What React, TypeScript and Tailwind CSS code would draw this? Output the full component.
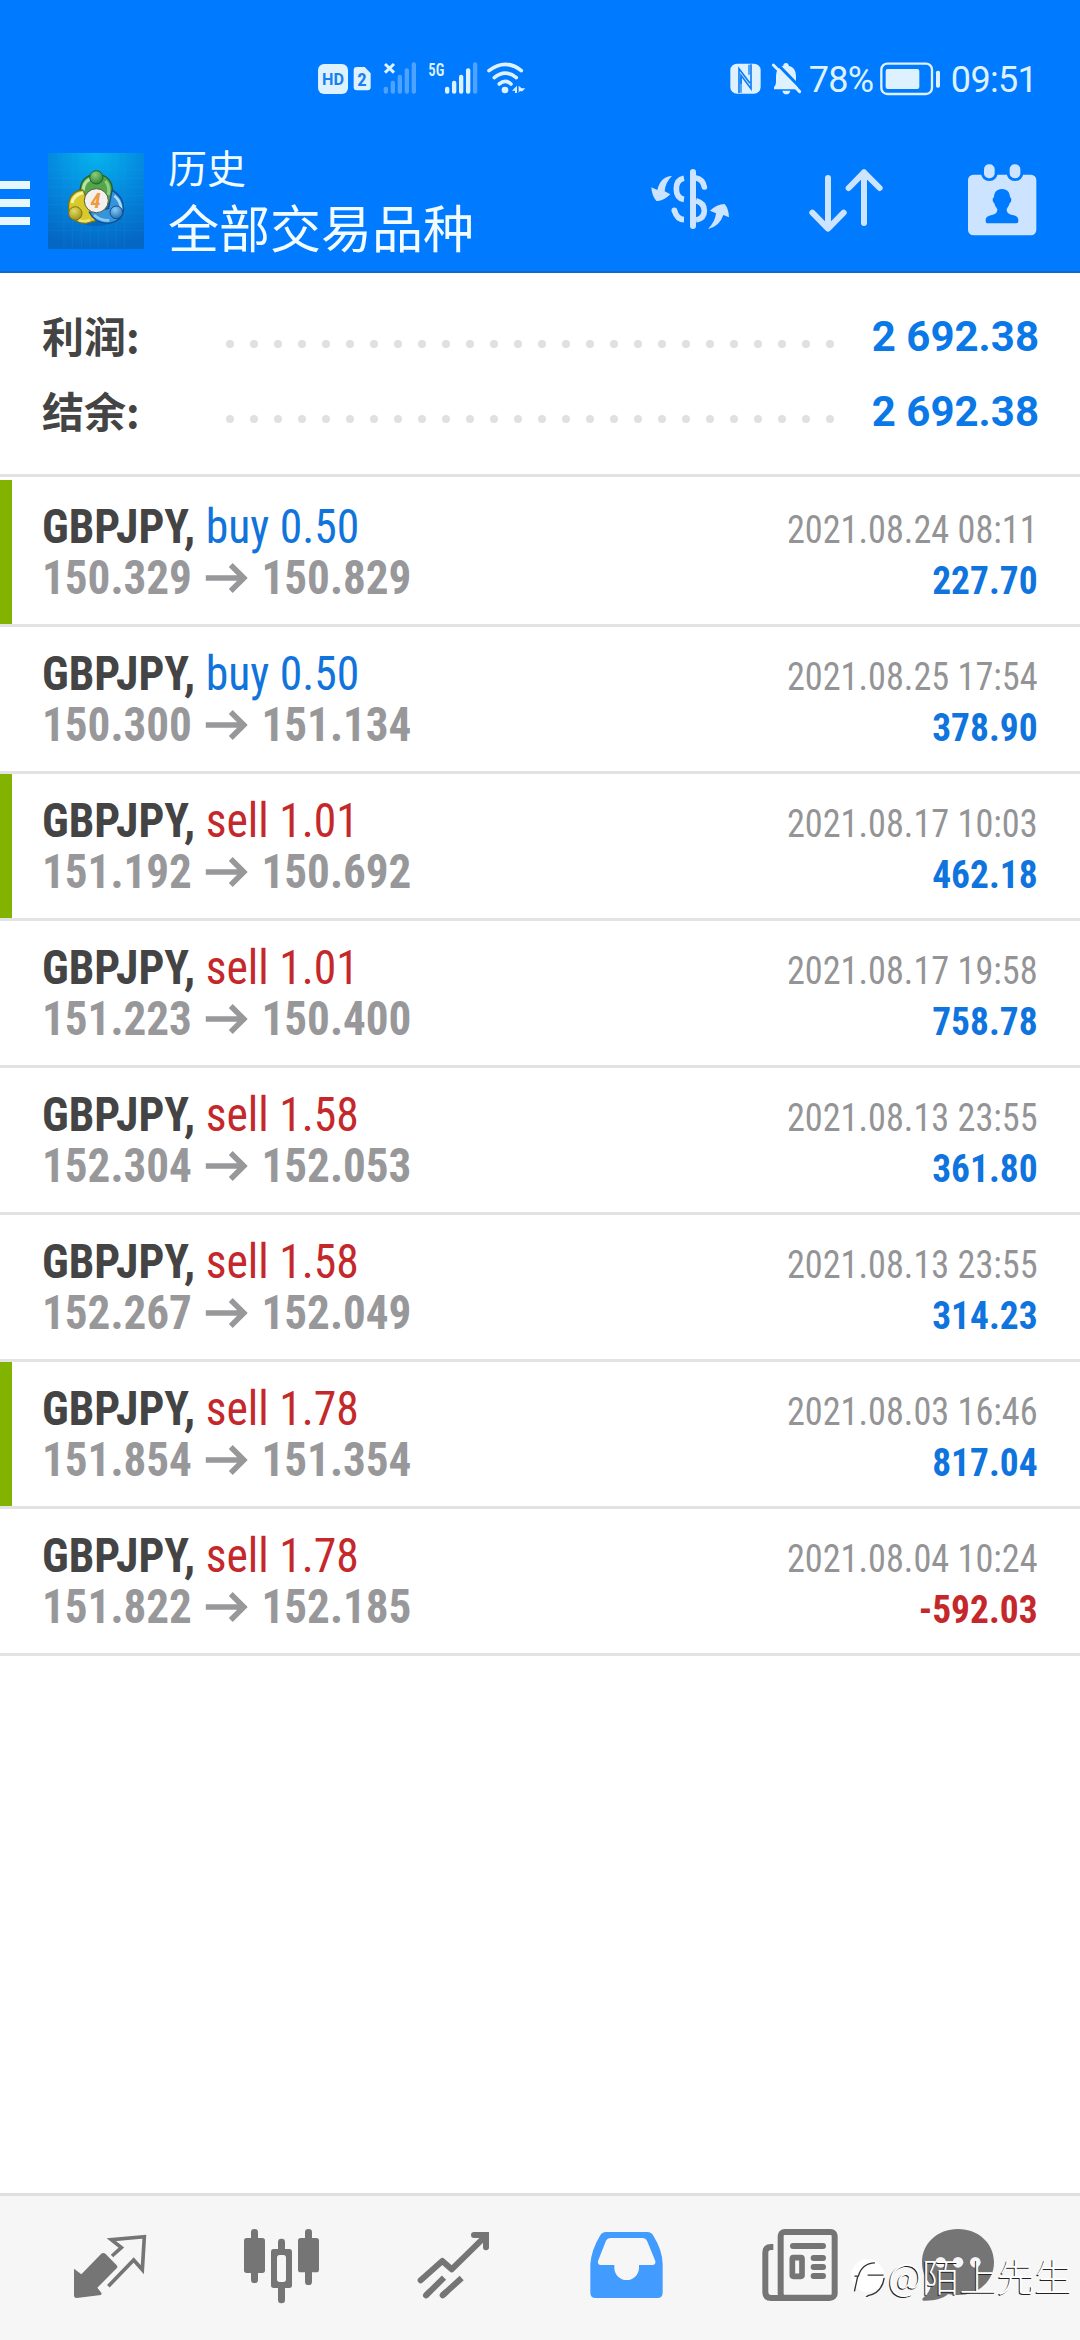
type Deal = {
  side: 'buy' | 'sell'
  volume: string
  open: string
  close: string
  time: string
  profit: string
  marked?: boolean
}

const deals: Deal[] = [
  { side: 'buy', volume: '0.50', open: '150.329', close: '150.829', time: '2021.08.24 08:11', profit: '227.70', marked: true },
  { side: 'buy', volume: '0.50', open: '150.300', close: '151.134', time: '2021.08.25 17:54', profit: '378.90' },
  { side: 'sell', volume: '1.01', open: '151.192', close: '150.692', time: '2021.08.17 10:03', profit: '462.18', marked: true },
  { side: 'sell', volume: '1.01', open: '151.223', close: '150.400', time: '2021.08.17 19:58', profit: '758.78' },
  { side: 'sell', volume: '1.58', open: '152.304', close: '152.053', time: '2021.08.13 23:55', profit: '361.80' },
  { side: 'sell', volume: '1.58', open: '152.267', close: '152.049', time: '2021.08.13 23:55', profit: '314.23' },
  { side: 'sell', volume: '1.78', open: '151.854', close: '151.354', time: '2021.08.03 16:46', profit: '817.04', marked: true },
  { side: 'sell', volume: '1.78', open: '151.822', close: '152.185', time: '2021.08.04 10:24', profit: '-592.03' },
]

const summary = [
  { label: '利润:', value: '2 692.38' },
  { label: '结余:', value: '2 692.38' },
]

const dots = Array.from({ length: 26 }, (_, i) => i)

function SignalIcons() {
  return (
    <svg viewBox="45 60 645 110" className="h-[36.67px] w-[215px]" fill="#def1ff">
      <rect x="54" y="72" width="90" height="90" rx="18" />
      <text x="99" y="136" textAnchor="middle" fill="#1a7ff0" fontSize="50" fontWeight="700" textLength="66" lengthAdjust="spacingAndGlyphs" className="font-['Roboto']">HD</text>
      <path d="M170 81h24l18 19v42q0 9-9 9h-33q-9 0-9-9V90q0-9 9-9z" />
      <text x="186" y="138" textAnchor="middle" fill="#1a7ff0" fontSize="56" fontWeight="700" className="font-['Roboto_Condensed','Roboto']">2</text>
      <g fill="#4da3ff">
        <rect x="251" y="140" width="13" height="21" rx="6" />
        <rect x="272" y="122" width="13" height="39" rx="6" />
        <rect x="293" y="104" width="13" height="57" rx="6" />
        <rect x="314" y="85" width="13" height="76" rx="6" />
        <rect x="335" y="67" width="13" height="94" rx="6" />
      </g>
      <path d="M255 72l27 26M282 72l-27 26" stroke="#def1ff" strokeWidth="9" />
      <text x="385" y="109" fontSize="54" fontWeight="600" textLength="48" lengthAdjust="spacingAndGlyphs" className="font-['Roboto_Condensed','Roboto']">5G</text>
      <rect x="435" y="140" width="13" height="21" rx="6" />
      <rect x="456" y="122" width="13" height="39" rx="6" />
      <rect x="477" y="104" width="13" height="57" rx="6" />
      <rect x="498" y="85" width="13" height="76" rx="6" />
      <rect x="519" y="67" width="13" height="94" rx="6" fill="#4da3ff" />
      <g fill="none" stroke="#def1ff" strokeWidth="11" strokeLinecap="round">
        <path d="M567 92q49-38 97 0" />
        <path d="M583 113q33-27 66 0" />
        <path d="M598 132q18-16 35 0" />
      </g>
      <circle cx="615" cy="150" r="10" />
      <path d="M636 152l15-15v22h-6v-7zM656 137v22l3-5h8l9-9h-11z" />
    </svg>
  )
}

function NfcIcon() {
  return (
    <svg viewBox="90 67 93 93" className="size-[31px]">
      <rect x="91" y="69" width="91" height="90" rx="20" fill="#def1ff" />
      <path d="M117 157V84l33 44M153 71v73l-30-40v26" fill="none" stroke="#0f7dfa" strokeWidth="5" />
      <path d="M123 108v48M147 72v30" fill="none" stroke="#0f7dfa" strokeWidth="4" />
    </svg>
  )
}

function MutedBellIcon() {
  return (
    <svg viewBox="212 65 93 98" className="h-[32.67px] w-[31px]" fill="#def1ff">
      <path d="M221 147h72v-7q-6-5-6-15v-18q0-26-22-31a8 8 0 0 0-16 0q-22 5-22 31v18q0 10-6 15z" />
      <path d="M246 151h24q-2 11-12 11t-12-11z" />
      <path d="M225 65l82 84" stroke="#007aff" strokeWidth="9" />
      <path d="M219 74l79 80" stroke="#def1ff" strokeWidth="9" strokeLinecap="round" />
    </svg>
  )
}

function BatteryIcon() {
  return (
    <svg viewBox="538 64 184 102" className="h-[34px] w-[61.33px]">
      <rect x="542" y="69" width="152" height="91" rx="18" fill="none" stroke="#def1ff" strokeWidth="7" />
      <rect x="555" y="85" width="101" height="60" rx="6" fill="#def1ff" />
      <rect x="706" y="90" width="12" height="51" rx="5" fill="#def1ff" />
    </svg>
  )
}

function StatusBar() {
  return (
    <div className="flex h-[130px] items-center justify-between pt-[27px] pr-[43px] pl-[315px] text-[#def1ff]">
      <SignalIcons />
      <div className="flex items-center font-['Roboto'] text-[36px] leading-10">
        <NfcIcon />
        <div className="ml-[10px]"><MutedBellIcon /></div>
        <span className="mt-[2px] ml-[7px] tracking-[-0.7px]">78%</span>
        <div className="ml-[6px]"><BatteryIcon /></div>
        <span className="mt-[2px] ml-[10px] tracking-[-0.7px]">09:51</span>
      </div>
    </div>
  )
}

function Logo() {
  return (
    <svg viewBox="0 0 288 288" className="size-24">
      <defs>
        <radialGradient id="sky" cx="0.5" cy="0" r="1">
          <stop offset="0" stopColor="#06b4ee" />
          <stop offset="0.5" stopColor="#0489de" />
          <stop offset="1" stopColor="#0467c4" />
        </radialGradient>
        <radialGradient id="green" cx="0.4" cy="0.3" r="0.8">
          <stop offset="0" stopColor="#8fce7c" />
          <stop offset="1" stopColor="#237a2c" />
        </radialGradient>
        <radialGradient id="gold" cx="0.4" cy="0.3" r="0.8">
          <stop offset="0" stopColor="#e6dc62" />
          <stop offset="1" stopColor="#978a12" />
        </radialGradient>
        <radialGradient id="azure" cx="0.4" cy="0.3" r="0.8">
          <stop offset="0" stopColor="#86cbf5" />
          <stop offset="1" stopColor="#1768b4" />
        </radialGradient>
      </defs>
      <rect width="288" height="288" fill="url(#sky)" />
      <path d="M48 0v288M74 0v288M100 0v288M126 0v288M152 0v288M178 0v288M204 0v288M230 0v288M0 50h288M0 76h288M0 102h288M0 128h288M0 154h288M0 180h288M0 206h288M0 232h288" stroke="#4dbcf5" strokeOpacity="0.14" strokeWidth="2" />
      <ellipse cx="145" cy="158" rx="82" ry="62" fill="#04489c" opacity="0.35" />
      <path d="M96 122q-2-56 50-58 48 2 48 56l-4 34-46-18-46-6z" fill="#54a64b" stroke="#1b6530" strokeWidth="4" />
      <path d="M105 114q2-36 36-40" fill="none" stroke="#b9e3a5" strokeWidth="9" />
      <path d="M172 84q14 14 9 42" fill="none" stroke="#8fce7c" strokeWidth="9" />
      <path d="M104 111q-38 4-42 44-4 52 52 56l30-8-24-60z" fill="#d9ca2c" stroke="#7f7512" strokeWidth="4" />
      <path d="M72 150q4-25 34-31" fill="none" stroke="#f8f2a0" strokeWidth="9" />
      <path d="M92 202q16 6 34-1" fill="none" stroke="#eee273" strokeWidth="8" />
      <path d="M192 112q34 18 35 58-5 38-50 41-38-2-53-33l58-12z" fill="#3594dc" stroke="#124f92" strokeWidth="4" />
      <path d="M199 128q20 16 20 40" fill="none" stroke="#a8dcfa" strokeWidth="8" />
      <path d="M138 186q20 18 46 16" fill="none" stroke="#8acbf5" strokeWidth="8" />
      <circle cx="145" cy="73" r="20" fill="url(#green)" stroke="#1b6530" strokeWidth="3" />
      <circle cx="82" cy="181" r="20" fill="url(#gold)" stroke="#7f7512" strokeWidth="3" />
      <circle cx="205" cy="178" r="19" fill="url(#azure)" stroke="#124f92" strokeWidth="3" />
      <circle cx="145" cy="143" r="36" fill="#f3f1ef" stroke="#5d5a38" strokeWidth="3" />
      <text x="143" y="165" textAnchor="middle" fontSize="62" fontWeight="700" fontStyle="italic" fill="#f09a3e" className="font-['Roboto_Condensed','Roboto']">4</text>
    </svg>
  )
}

function CurrencyIcon() {
  return (
    <svg viewBox="84 66 252 222" className="h-[74px] w-[84px]" fill="#cce4ff">
      <rect x="210" y="87" width="18" height="180" rx="9" />
      <g fill="none" stroke="#cce4ff" strokeWidth="17">
        <path d="M192 115q-23 4-23 32t23 31" />
        <path d="M228 114q20 3 25 27" strokeLinecap="round" />
        <path d="M163 211q8 27 29 28" />
        <path d="M228 182q25 7 25 30t-25 28" />
      </g>
      <circle cx="163" cy="211" r="8.500" />
      <path d="M156 108q-35 2-44 42l-18-8q1 24 15 41 20 2 42-20l-17-9q2-27 22-46z" />
      <path d="M264 267q35-8 46-42l17 7q-1-26-13-40-24 1-44 20l18 8q-2 25-24 47z" />
    </svg>
  )
}

function SortIcon() {
  return (
    <svg viewBox="564 66 228 222" className="h-[74px] w-[76px]" fill="none" stroke="#cce4ff" strokeWidth="18" strokeLinecap="round" strokeLinejoin="round">
      <path d="M624 114v151M577 218l47 48 47-48" />
      <path d="M732 249V97M686 144l46-47 47 47" />
    </svg>
  )
}

function CalendarIcon() {
  return (
    <svg viewBox="1038 66 216 222" className="h-[74px] w-[72px]">
      <rect x="1044" y="104" width="205" height="182" rx="16" fill="#cce4ff" />
      <rect x="1083" y="66" width="50" height="57" rx="24" fill="#007aff" />
      <rect x="1160" y="66" width="50" height="57" rx="24" fill="#007aff" />
      <rect x="1092" y="73" width="32" height="42" rx="15" fill="#cce4ff" />
      <rect x="1169" y="73" width="32" height="42" rx="15" fill="#cce4ff" />
      <path d="M1146 147c17 0 24 12 24 25 5 1 6 13-1 18-3 10-8 14-9 18 0 11 7 15 17 17 15 3 18 8 18 17q0 8-7 8h-84q-7 0-7-8c0-9 4-14 18-17 11-2 17-6 17-17-1-4-7-8-9-18-7-5-6-17-1-18 0-13 7-25 24-25z" fill="#007aff" />
    </svg>
  )
}

function Header() {
  return (
    <header className="h-[273px] border-b-2 border-[#1268c8] bg-[#007aff]">
      <StatusBar />
      <div className="flex h-[141px] items-start">
        <div className="mt-[51px] flex w-[30px] flex-col gap-[10px]">
          <div className="h-2 bg-[#e6f7ff]" />
          <div className="h-2 bg-[#e6f7ff]" />
          <div className="h-2 bg-[#e6f7ff]" />
        </div>
        <div className="mt-[23px] ml-[18px]"><Logo /></div>
        <div className="mt-[6px] ml-6 flex-1 font-['Noto_Sans_CJK_SC',sans-serif] text-[#f2fbff]">
          <div className="text-[39px] leading-[60px]">历史</div>
          <div className="text-[51px] leading-[60px]">全部交易品种</div>
        </div>
        <div className="mt-8 mr-[42px] flex">
          <CurrencyIcon />
          <div className="ml-[76px]"><SortIcon /></div>
          <div className="ml-[82px]"><CalendarIcon /></div>
        </div>
      </div>
    </header>
  )
}

function SummaryRow({ label, value }: { label: string; value: string }) {
  return (
    <div className="flex h-[75px] items-center pr-[41px] pl-[42px] text-[42px] leading-[71px] font-bold">
      <div className="w-[184px] pb-1 font-['Noto_Sans_CJK_SC',sans-serif] text-[#444444]">{label}</div>
      <div className="mt-[15px] flex w-[608px] justify-between">
        {dots.map((dot) => (
          <span key={dot} className="size-2 rounded-full bg-[#e0e0e0]" />
        ))}
      </div>
      <div className="flex-1 text-right font-['Roboto',sans-serif] text-[#0b78e8]">{value}</div>
    </div>
  )
}

function Arrow() {
  return (
    <svg viewBox="0 0 42 32" preserveAspectRatio="none" className="mr-[15px] ml-[14px] h-8 w-[45px]" fill="none" stroke="#98989b" strokeWidth="5.500">
      <path d="M0 16h38M25 3l13 13-13 13" />
    </svg>
  )
}

function DealRow({ deal }: { deal: Deal }) {
  return (
    <div className="flex h-[147px] border-b-3 border-[#e3e3e3] font-['Roboto_Condensed','Roboto',sans-serif]">
      <div className={deal.marked ? 'w-3 bg-[#82b300]' : 'w-3'} />
      <div className="flex flex-1 justify-between pr-[42px] pl-[30px]">
        <div className="pt-[21px] text-[48px] leading-[51px]">
          <div className="origin-left scale-x-95">
            <span className="font-bold text-[#444444]">GBPJPY, </span>
            <span className={deal.side === 'buy' ? 'text-[#1174dc]' : 'text-[#c5282b]'}>
              {deal.side} {deal.volume}
            </span>
          </div>
          <div className="flex origin-left scale-x-[0.94] items-center font-bold text-[#98989b]">
            {deal.open}
            <Arrow />
            {deal.close}
          </div>
        </div>
        <div className="pt-[25px] text-right text-[39px] leading-[51px]">
          <div className="origin-right scale-x-[0.93] text-[#949496]">{deal.time}</div>
          <div className={deal.profit.startsWith('-') ? 'origin-right scale-x-[0.96] font-bold text-[#c5282b]' : 'origin-right scale-x-[0.96] font-bold text-[#0f74dd]'}>
            {deal.profit}
          </div>
        </div>
      </div>
    </div>
  )
}

function TabBar() {
  return (
    <nav className="relative flex h-[147px] gap-[76px] border-t-3 border-[#dfdfdf] bg-[#f6f6f6] pt-[28px] pl-[62px]">
      {/* quotes */}
      <svg viewBox="66 132 288 252" className="h-[84px] w-24" fill="#757575">
        <path d="M102 266l22 17 59-61q7-6 14 0l33 34q4 5 0 9l-58 58 13 17-2 5-73 9q-8 0-8-8z" />
        <path d="M216 228l28-25-30-24 99-9-6 99-26-29-76 79" fill="none" stroke="#757575" strokeWidth="11" />
      </svg>
      {/* charts */}
      <svg viewBox="582 132 288 252" className="h-[84px] w-24" fill="#757575">
        <rect x="633" y="147" width="21" height="162" rx="10" />
        <rect x="612" y="174" width="63" height="105" rx="8" />
        <rect x="714" y="176" width="21" height="194" rx="10" />
        <rect x="693" y="207" width="63" height="117" rx="8" />
        <rect x="711" y="225" width="27" height="81" rx="8" fill="#f6f6f6" />
        <rect x="795" y="147" width="21" height="168" rx="10" />
        <rect x="774" y="174" width="63" height="103" rx="8" />
      </svg>
      {/* trade */}
      <svg viewBox="78 132 288 252" className="h-[84px] w-24" fill="none" stroke="#757575" strokeWidth="18" strokeLinecap="round">
        <path d="M122 301l65-58 28 25 100-98" strokeLinejoin="round" />
        <path d="M282 165h36v37" />
        <path d="M138 346l54-53M188 346l57-52" strokeLinecap="butt" />
        <path d="M138 346l10-10M188 346l10-9" />
      </svg>
      {/* history */}
      <svg viewBox="594 132 288 252" className="h-[84px] w-24">
        <path d="M678 156h124q12 0 18 11 27 43 28 85v86q0 16-16 16H647q-16 0-16-16v-86q3-42 29-85 6-11 18-11z" fill="#429bff" />
        <path d="M691 174h97q9 0 13 8l25 61q2 12-9 12h-40v8a37 37 0 0 1-74 0v-8h-40q-11 0-9-12l24-61q4-8 13-8z" fill="#f6f6f6" />
      </svg>
      {/* news */}
      <svg viewBox="60 132 288 252" className="h-[84px] w-24" fill="none" stroke="#757575" strokeWidth="18">
        <path d="M130 201h-7q-17 0-17 17v118q0 18 18 18h176" />
        <rect x="152" y="156" width="162" height="197" rx="12" />
        <path d="M189 198h90M251 234h28M251 261h28M251 288h28" strokeLinecap="round" />
        <rect x="187" y="233" width="29" height="56" rx="3" strokeWidth="17" />
      </svg>
      {/* messages */}
      <svg viewBox="576 132 288 252" className="h-[84px] w-24" fill="#757575">
        <path d="M684 147c62 0 108 44 108 100s-46 98-108 98c-12 0-20-1-29-3-17 14-42 21-75 20-4-1-4-6 0-9 17-16 22-26 22-39-17-18-26-41-26-67 0-56 46-100 108-100z" />
        <g fill="#f6f6f6">
          <circle cx="632" cy="247" r="16" />
          <circle cx="684" cy="247" r="16" />
          <circle cx="736" cy="247" r="16" />
        </g>
      </svg>
      {/* signature laid over the bar */}
      <div className="absolute top-[55px] right-[8px] flex items-center">
        <svg viewBox="0 15 120 130" className="h-[43px] w-10">
          <circle cx="62" cy="80" r="50" fill="#ffffff" />
          <path d="M22 128l10-46M22 82h12q10-38 50-40M62 79h48M43 158l20-17q42-8 49-54" fill="none" stroke="#333333" strokeWidth="4" />
        </svg>
        <span className="ml-px font-['Noto_Sans_CJK_SC',sans-serif] text-[37.5px] leading-[48px] font-light text-white [text-shadow:-1px_1px_0_#222222]">
          @陌上先生
        </span>
      </div>
    </nav>
  )
}

export default function App() {
  return (
    <div className="flex h-[2340px] w-[1080px] flex-col overflow-hidden bg-white">
      <Header />
      <main className="flex-1">
        <section className="mb-[3px] h-[204px] border-b-3 border-[#e3e3e3] pt-[26px]">
          {summary.map((row) => (
            <SummaryRow key={row.label} {...row} />
          ))}
        </section>
        {deals.map((deal) => (
          <DealRow key={deal.open} deal={deal} />
        ))}
      </main>
      <TabBar />
    </div>
  )
}
